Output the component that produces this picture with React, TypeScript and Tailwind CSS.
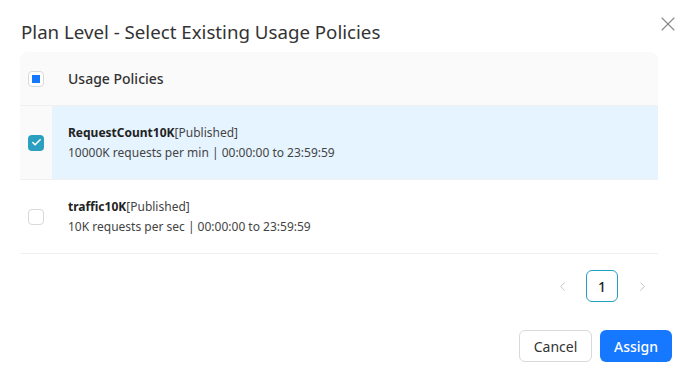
import { X, ChevronLeft, ChevronRight, Check } from 'lucide-react';

const policies = [
  { name: 'RequestCount10K', status: '[Published]', desc: '10000K requests per min | 00:00:00 to 23:59:59', checked: true },
  { name: 'traffic10K', status: '[Published]', desc: '10K requests per sec | 00:00:00 to 23:59:59', checked: false },
];

const App = () => {
  return (
    <div className="w-[693px] h-[377px] bg-white text-[#333] font-['Noto_Sans',sans-serif] relative">
      <button className="absolute left-[656px] top-[12px] text-[#888]">
        <X size={24} strokeWidth={1.1} />
      </button>
      <div className="pl-[20px] pr-[35px] pt-[19px]">
        <h2 className="text-[18.7px] leading-[25px] text-[#333] pl-[1px]">Plan Level - Select Existing Usage Policies</h2>
        <div className="mt-[8px] w-[638px]">
          <div className="flex items-center h-[54px] bg-[#fafafa] rounded-t-[8px] border-b border-[#f0f0f0]">
            <div className="w-[32px] flex justify-center">
              <span className="w-[16px] h-[16px] border border-[#d9d9d9] rounded-[4px] bg-white flex items-center justify-center">
                <span className="w-[8px] h-[8px] bg-[#1677ff]" />
              </span>
            </div>
            <div className="pl-[16px] text-[14px] font-medium text-[#333]">Usage Policies</div>
          </div>
          {policies.map((p) => (
            <div key={p.name} className="flex h-[74px] border-b border-[#f0f0f0]">
              <div className={`w-[32px] flex items-center justify-center ${p.checked ? 'bg-[#fafafa]' : 'bg-white'}`}>
                {p.checked ? (
                  <span className="w-[16px] h-[16px] rounded-[4px] bg-[#2a9fc0] flex items-center justify-center text-white">
                    <Check size={11} strokeWidth={3.5} />
                  </span>
                ) : (
                  <span className="w-[16px] h-[16px] border border-[#d9d9d9] rounded-[4px] bg-white" />
                )}
              </div>
              <div className={`flex-1 flex flex-col justify-center pl-[16px] pt-[1px] ${p.checked ? 'bg-[#e6f4ff]' : 'bg-white'}`}>
                <div className="text-[12px] leading-[20px]">
                  <span className="font-bold text-[#222]">{p.name}</span>
                  <span className="text-[#444]">{p.status}</span>
                </div>
                <div className="text-[12px] leading-[20px] text-[#444]">{p.desc}</div>
              </div>
            </div>
          ))}
          <div className="flex justify-end items-center gap-[8px] mt-[16px]">
            <span className="w-[32px] h-[32px] flex items-center justify-center text-[#bbb]">
              <ChevronLeft size={15} strokeWidth={1.4} />
            </span>
            <span className="w-[32px] h-[32px] flex items-center justify-center border border-[#22a0c0] rounded-[6px] text-[14px] font-medium text-[#222]">1</span>
            <span className="w-[32px] h-[32px] flex items-center justify-center text-[#bbb]">
              <ChevronRight size={15} strokeWidth={1.4} />
            </span>
          </div>
        </div>
      </div>
      <div className="flex justify-end gap-[8px] pr-[21px] mt-[28px]">
        <button className="w-[73px] h-[32px] border border-[#d9d9d9] rounded-[6px] text-[14px] text-[#333] bg-white">Cancel</button>
        <button className="w-[72px] h-[32px] rounded-[6px] text-[14px] font-medium text-white bg-[#1677ff]">Assign</button>
      </div>
    </div>
  );
};

export default App;
